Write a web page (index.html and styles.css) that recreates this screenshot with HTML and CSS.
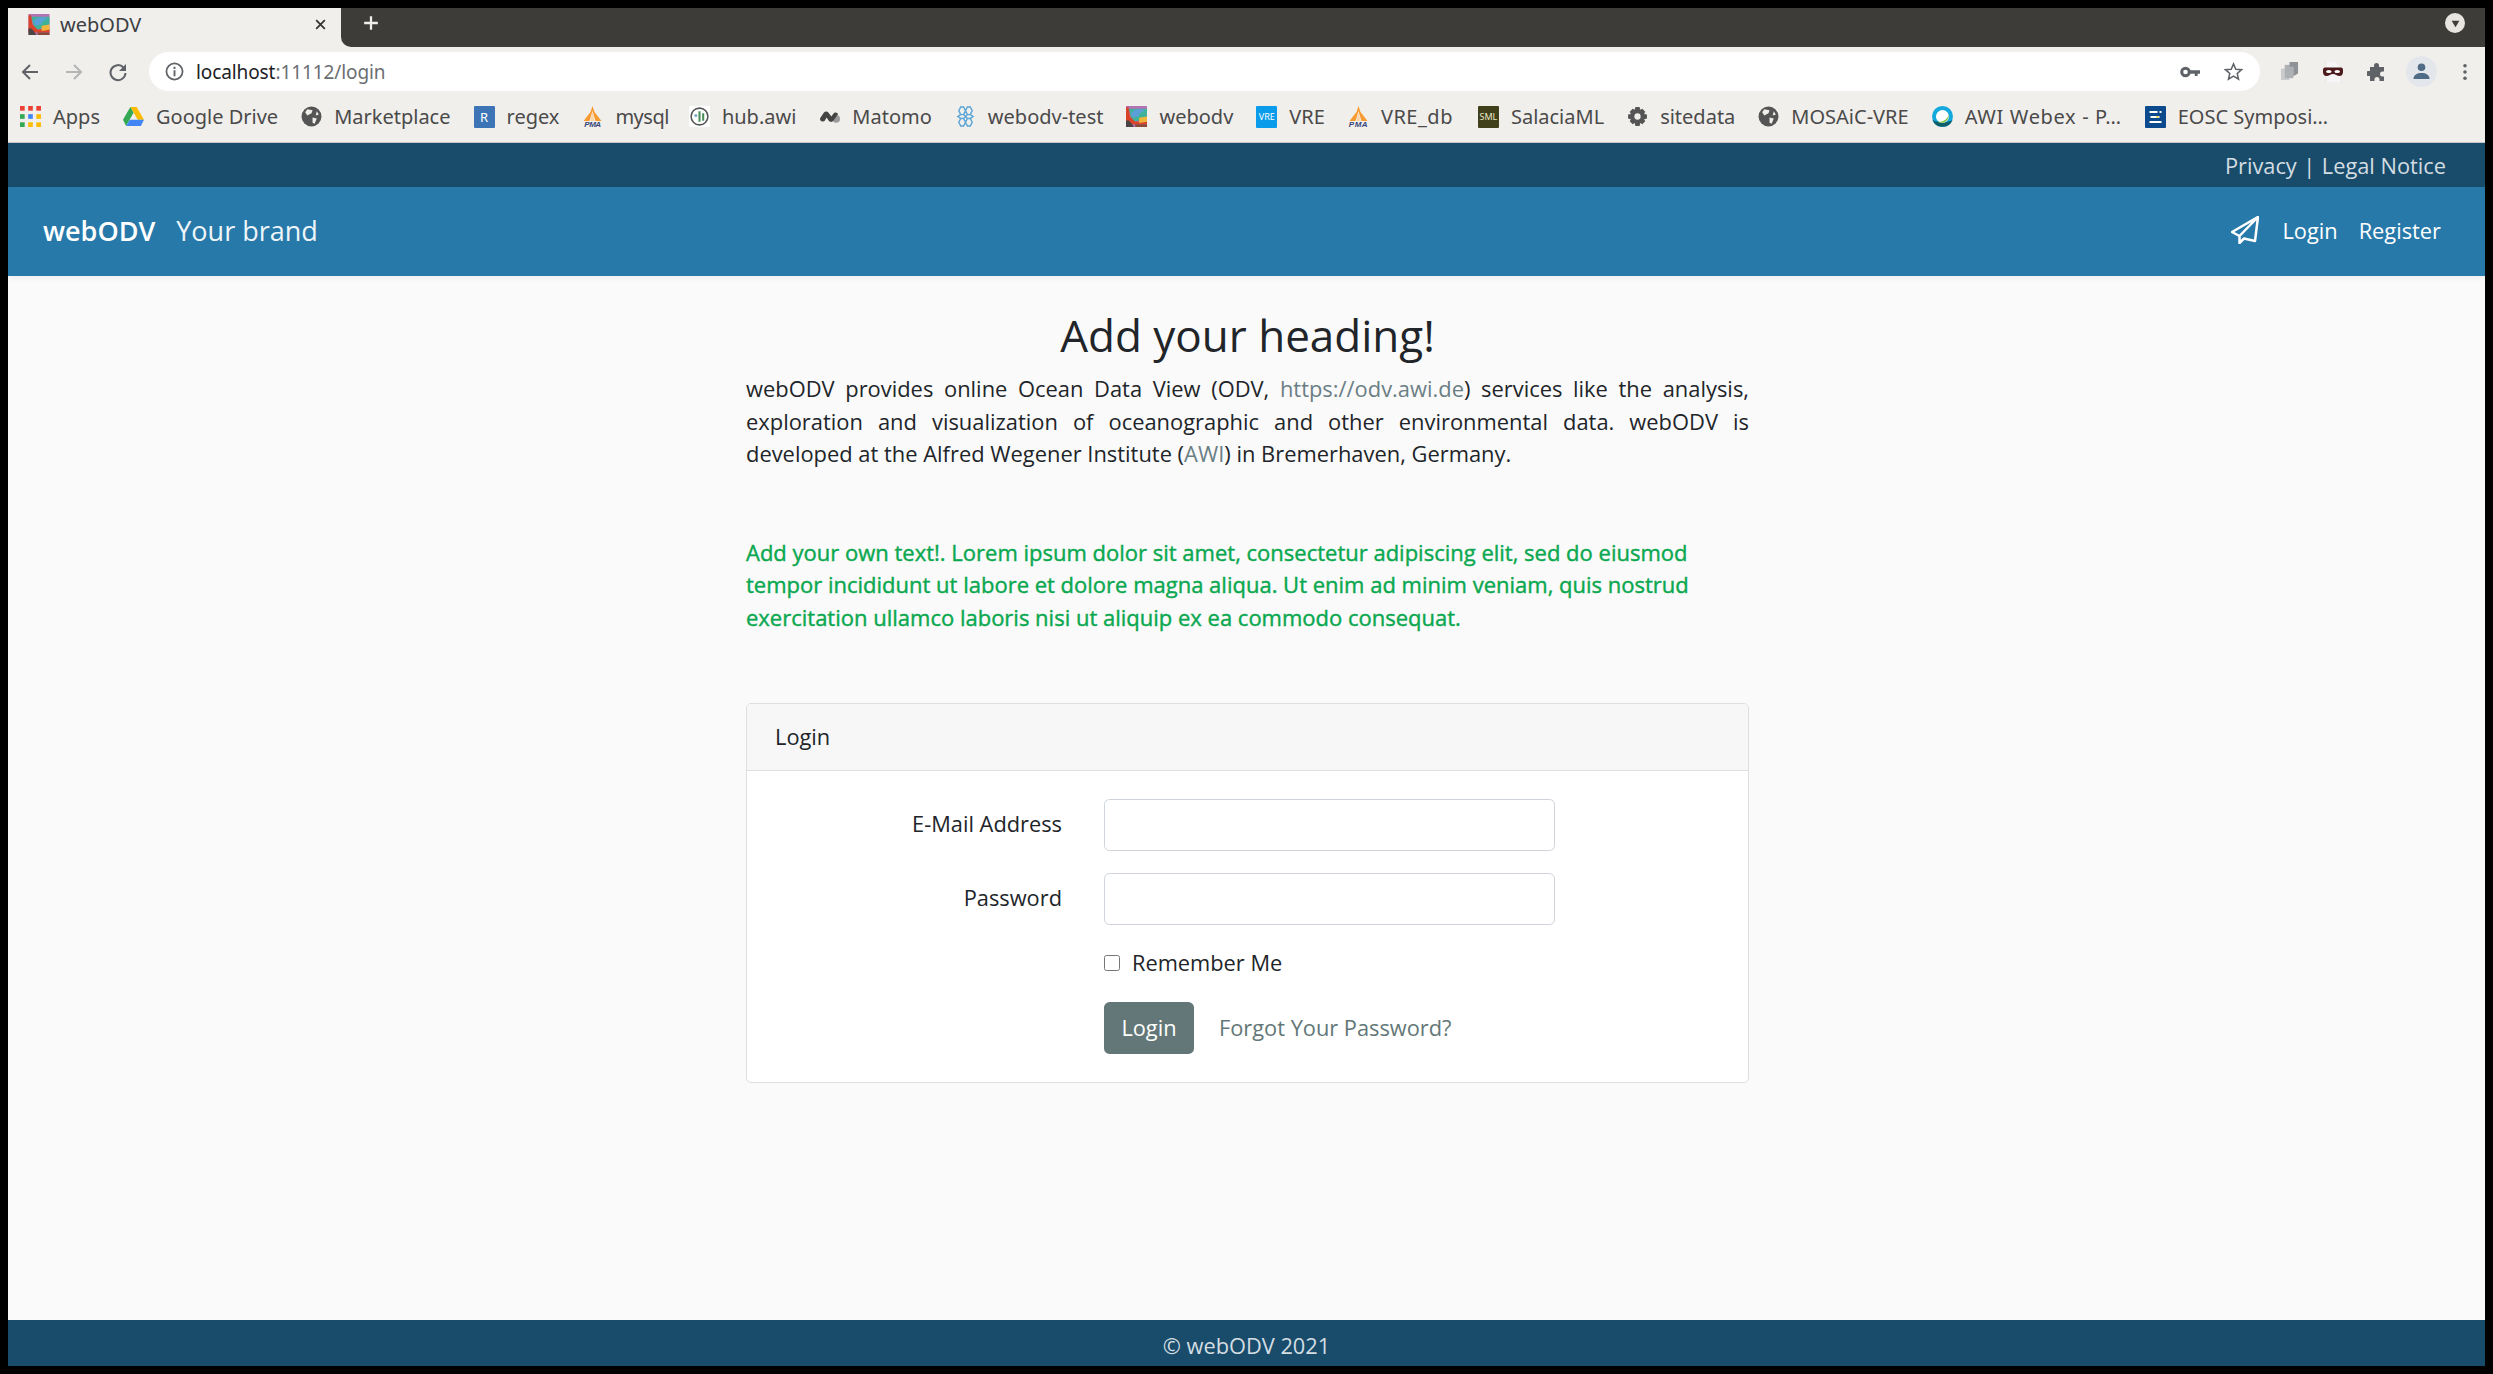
FILE: index.html
```html
<!DOCTYPE html>
<html lang="en">
<head>
<meta charset="utf-8">
<title>webODV</title>
<link rel="stylesheet" href="styles.css">
</head>
<body>
<div class="window">
  <div class="tabstrip">
    <div class="tab">
      <svg class="fav" viewBox="0 0 16 16"><use href="#odv"/></svg>
      <span class="tab-title">webODV</span>
      <svg class="tab-close" viewBox="0 0 12 12"><path d="M2 2l8 8M10 2l-8 8" stroke="#333" stroke-width="1.6" fill="none"/></svg>
    </div>
    <div class="strip-rest">
      <svg class="newtab" viewBox="0 0 14 14"><path d="M7 1v12M1 7h12" stroke="#f1efec" stroke-width="2" fill="none"/></svg>
      <div class="strip-space"></div>
      <div class="strip-menu"><svg viewBox="0 0 10 10"><path d="M1.5 2.5h7L5 8.500z" fill="#3d3c38"/></svg></div>
    </div>
  </div>
  <div class="toolbar">
    <svg class="nav-ic" viewBox="0 0 20 20"><path d="M18 10H3M10 3l-7 7 7 7" stroke="#5f6368" stroke-width="2" fill="none"/></svg>
    <svg class="nav-ic" viewBox="0 0 20 20"><path d="M2 10h15M10 3l7 7-7 7" stroke="#b4b5b6" stroke-width="2" fill="none"/></svg>
    <svg class="nav-ic" viewBox="0 0 20 20"><path d="M15.500 5.500A7.500 7.500 0 1 0 17.500 11" stroke="#5f6368" stroke-width="2" fill="none"/><path d="M18 2v7h-7z" fill="#5f6368"/></svg>
    <div class="omnibox">
      <svg class="info" viewBox="0 0 16 16"><circle cx="8" cy="8" r="6.800" stroke="#5f6368" stroke-width="1.500" fill="none"/><path d="M8 7v5M8 4v1.800" stroke="#5f6368" stroke-width="1.600"/></svg>
      <span class="url"><span class="url-host">localhost</span>:11112/login</span>
      <span class="omni-space"></span>
      <svg class="key" viewBox="0 0 20 12"><circle cx="5.500" cy="6" r="3.800" stroke="#5f6368" stroke-width="3" fill="none"/><path d="M9 4.300h11v3.400h-2.400V10h-2.800V7.700H9z" fill="#5f6368"/></svg>
      <svg class="star" viewBox="0 0 20 20"><path d="M10 2l2.400 5.600 6.100.5-4.600 4 1.400 6L10 14.900 4.700 18.100l1.400-6-4.600-4 6.100-.5z" stroke="#5f6368" stroke-width="1.600" fill="none"/></svg>
    </div>
    <svg class="ext ext-docs" viewBox="0 0 20 20"><rect x="1" y="7" width="9" height="12" fill="#c9cbcd"/><rect x="5" y="3" width="9" height="14" fill="#aeb1b4"/><path d="M10 0h9v12l-5 3V5h-4z" fill="#8f9296"/></svg>
    <svg class="ext ext-mask" viewBox="0 0 22 22"><path d="M4 0h9l6 6v16H4z" fill="#f6f6f6" stroke="#e0e0e0" stroke-width=".6"/><path d="M1 9c0-2 1-2.500 3-2.500h14c2 0 3 .5 3 2.500v2c0 2-1 4-3.500 4-2.500 0-4-2-6.500-2s-4 2-6.500 2C2 15 1 13 1 11z" fill="#4d1a1c"/><ellipse cx="6.800" cy="10.500" rx="2.800" ry="1.600" fill="#fff"/><ellipse cx="15.200" cy="10.500" rx="2.800" ry="1.600" fill="#fff"/></svg>
    <svg class="ext ext-puzzle" viewBox="0 0 20 20"><path d="M7 3.500a2.500 2.500 0 0 1 5 0V5h5v4.500h-1.500a2.500 2.500 0 0 0 0 5H17V19h-4.500v-1.500a2.500 2.500 0 0 0-5 0V19H3v-5H1.500a2.500 2.500 0 0 1 0-5H3V5h4z" fill="#5f6368"/></svg>
    <div class="avatar"><svg viewBox="0 0 20 20"><circle cx="10" cy="5.500" r="4" fill="#4f6b85"/><path d="M1.500 18c0-4.500 4-6.500 8.500-6.500s8.500 2 8.500 6.500z" fill="#4f6b85"/></svg></div>
    <svg class="kebab" viewBox="0 0 4 20"><circle cx="2" cy="3" r="2" fill="#5f6368"/><circle cx="2" cy="10" r="2" fill="#5f6368"/><circle cx="2" cy="17" r="2" fill="#5f6368"/></svg>
  </div>
  <div class="bookmarks">
    <span class="bm"><svg class="bm-ic" viewBox="0 0 18 18"><rect x="0" y="0" width="4" height="4" fill="#ea4335"/><rect x="7" y="0" width="4" height="4" fill="#ea4335"/><rect x="14" y="0" width="4" height="4" fill="#ea4335"/><rect x="0" y="7" width="4" height="4" fill="#34a853"/><rect x="7" y="7" width="4" height="4" fill="#4285f4"/><rect x="14" y="7" width="4" height="4" fill="#fbbc04"/><rect x="0" y="14" width="4" height="4" fill="#34a853"/><rect x="7" y="14" width="4" height="4" fill="#fbbc04"/><rect x="14" y="14" width="4" height="4" fill="#fbbc04"/></svg>Apps</span>
    <span class="bm"><svg class="bm-ic" viewBox="0 0 20 18"><path d="M7 0h6l7 12h-6z" fill="#fbbc04"/><path d="M7 0l3 5.500L3 18l-3-6z" fill="#34a853"/><path d="M3 18l3.500-6H20l-3 6z" fill="#4285f4"/></svg>Google Drive</span>
    <span class="bm"><svg class="bm-ic" viewBox="0 0 20 20"><use href="#globe"/></svg>Marketplace</span>
    <span class="bm"><span class="bm-sq bm-r">R</span>regex</span>
    <span class="bm bm-tight"><svg class="bm-ic" viewBox="0 0 20 21"><use href="#pma"/></svg>mysql</span>
    <span class="bm"><svg class="bm-ic" viewBox="0 0 20 20"><rect width="20" height="20" fill="#fff"/><circle cx="10" cy="10" r="8" fill="none" stroke="#555" stroke-width="1.500"/><path d="M10 5v10M13.500 7v7" stroke="#4a8f5a" stroke-width="2"/><circle cx="6.500" cy="9" r="1.500" fill="#7fa9c9"/></svg>hub.awi</span>
    <span class="bm"><svg class="bm-ic" viewBox="0 0 22 14"><circle cx="18" cy="9.500" r="4" fill="#9a9a9a"/><path d="M1 9 5 3a3.200 3.200 0 0 1 5 0l3 4 2-3a3 3 0 0 1 5 .5l-5 7a3 3 0 0 1-4.800 0L8 8l-2 3.500A3 3 0 0 1 1 9z" fill="#444"/></svg>Matomo</span>
    <span class="bm"><svg class="bm-ic" viewBox="0 0 22 22"><g fill="none" stroke="#5aa5d5" stroke-width="1.500"><path d="M6 1h3l2 4-2 4H6L4 5zM13 1h3l2 4-2 4h-3l-2-4zM6 13h3l2 4-2 4H6l-2-4zM13 13h3l2 4-2 4h-3l-2-4zM6 9l-3 2 3 2M16 9l3 2-3 2M9 9l2 2 2-2M9 13l2-2 2 2"/></g></svg>webodv-test</span>
    <span class="bm"><svg class="bm-ic" viewBox="0 0 16 16"><use href="#odv"/></svg>webodv</span>
    <span class="bm"><span class="bm-sq bm-vre">VRE</span>VRE</span>
    <span class="bm bm-loose"><svg class="bm-ic" viewBox="0 0 20 21"><use href="#pma"/></svg>VRE_db</span>
    <span class="bm"><span class="bm-sq bm-sml">SML</span>SalaciaML</span>
    <span class="bm"><svg class="bm-ic" viewBox="0 0 20 20"><path d="M8 1h4l.6 2.600 2-.9 2.800 2.800-1.100 2L19 8.200v3.600l-2.700.7 1.100 2-2.800 2.800-2-1.100L12 19H8l-.6-2.800-2 1.100-2.800-2.800 1.100-2L1 11.800V8.200l2.700-.7-1.100-2 2.800-2.800 2 .9z" fill="#555"/><circle cx="10" cy="10" r="3" fill="#f1efec"/></svg>sitedata</span>
    <span class="bm"><svg class="bm-ic" viewBox="0 0 20 20"><use href="#globe"/></svg>MOSAiC-VRE</span>
    <span class="bm bm-wide"><svg class="bm-ic" viewBox="0 0 20 20"><circle cx="10" cy="10" r="10" fill="#14a8dc"/><path d="M.5 13a10 10 0 0 0 19 0c-2 3-16 3-19 0z" fill="#0d5f6e"/><circle cx="10" cy="10" r="6.200" fill="#fff"/><path d="M15.800 8c.8 4-2.500 8-7 8-1.500 0-2.500-.5-3-1 4 .5 9-2 10-7z" fill="#7cc243"/></svg>AWI Webex - P…</span>
    <span class="bm"><span class="bm-sq bm-eosc"><svg viewBox="0 0 20 22"><path d="M4 6h8M14 6h2M5 11h9M4 16h12" stroke="#fff" stroke-width="2"/><path d="M11 11h2" stroke="#f5d442" stroke-width="2"/></svg></span>EOSC Symposi…</span>
    <svg class="defs" width="0" height="0"><defs>
      <g id="globe"><circle cx="10" cy="10" r="9.500" fill="#555"/><path d="M6 3l5 1-1 3-4 2-2-3zM11 11l4 1-2 5-2-1zM15 5l2 3-3 1z" fill="#f1efec"/></g>
      <g id="pma"><path d="M10 0l2 6 7 9H13L10 5 7 15H1l7-9z" fill="#f79a30"/><path d="M10 5l2 10H8z" fill="#fcd6a8"/><text x="10" y="21" text-anchor="middle" font-size="8" font-weight="700" font-style="italic" fill="#35467a" font-family="Liberation Sans, sans-serif">PMA</text></g>
      <g id="odv"><rect width="16" height="16" fill="#b473b4"/><path d="M2 2h14v6l-6 3-5 1z" fill="#3fb39a"/><path d="M4 5c3-3 8-3 11-1.500C12 4 10 6 9.500 8L5 9z" fill="#5b9fd8"/><path d="M0 1h2l1 7 4 4 9-1v3H0z" fill="#d9432a"/><path d="M10 9l6-1v4l-6 1z" fill="#f0b53a"/><path d="M0 11l2 0 2 2 2 3H0z" fill="#4a4444"/><path d="M7 14h9v2H7z" fill="#8a4a3a"/></g>
    </defs></svg>
  </div>
  <div class="page">
    <div class="topbar"><a>Privacy</a><span class="sep">|</span><a>Legal Notice</a></div>
    <nav class="navbar">
      <a class="brand">webODV</a>
      <a class="brand-sub">Your brand</a>
      <span class="nav-space"></span>
      <svg class="plane" viewBox="0 0 28 28"><path d="M27 1 1 16l7.500 4v7l4.500-4.500L24 25z M27 1 8.500 20" fill="none" stroke="#fff" stroke-width="2.500" stroke-linejoin="round"/></svg>
      <a class="nav-link">Login</a>
      <a class="nav-link">Register</a>
    </nav>
    <main class="main">
      <div class="container">
        <h1 class="heading">Add your heading!</h1>
        <p class="intro">webODV provides online Ocean Data View (ODV, <a class="link">https://odv.awi.de</a>) services like the analysis, exploration and visualization of oceanographic and other environmental data. webODV is developed at the Alfred Wegener Institute (<a class="link">AWI</a>) in Bremerhaven, Germany.</p>
        <p class="custom">Add your own text!. Lorem ipsum dolor sit amet, consectetur adipiscing elit, sed do eiusmod tempor incididunt ut labore et dolore magna aliqua. Ut enim ad minim veniam, quis nostrud exercitation ullamco laboris nisi ut aliquip ex ea commodo consequat.</p>
        <section class="card">
          <header class="card-header">Login</header>
          <form class="card-body">
            <div class="form-row"><label class="form-label">E-Mail Address</label><div class="form-field"><input class="input" type="email"></div></div>
            <div class="form-row"><label class="form-label">Password</label><div class="form-field"><input class="input" type="password"></div></div>
            <div class="form-row form-row-check"><span class="form-label"></span><div class="form-field check-field"><input class="check" type="checkbox"><span>Remember Me</span></div></div>
            <div class="form-row last"><span class="form-label"></span><div class="form-field action-field"><button class="btn" type="button">Login</button><a class="forgot">Forgot Your Password?</a></div></div>
          </form>
        </section>
      </div>
    </main>
    <footer class="footer">© webODV 2021</footer>
  </div>
</div>
</body>
</html>
```
FILE: styles.css
```css
* { box-sizing: border-box; }
html, body { margin: 0; height: 100%; }
body { background: #000; padding: 8px; font-family: "Open Sans", sans-serif; overflow: hidden; }
.window { height: 100%; display: flex; flex-direction: column; background: #f1efec; }
.tabstrip { height: 39px; flex: none; background: #f1efec; display: flex; align-items: stretch; }
.tab { width: 333px; display: flex; align-items: center; padding: 0 14px 6px 20px; font-family: "Noto Sans", sans-serif; border-top-left-radius: 6px; }
.fav { width: 22px; height: 21px; margin-right: 10px; }
.tab-title { font-size: 20px; color: #3c4043; flex: 1; }
.tab-close { width: 13px; height: 13px; }
.strip-rest { flex: 1; display: flex; background: #3d3c38; border-bottom-left-radius: 10px; }
.newtab { width: 16px; height: 16px; margin: 7px 0 0 22px; }
.strip-space { flex: 1; }
.strip-menu { width: 20px; height: 20px; border-radius: 50%; background: #e8e4df; margin: 5px 20px 0 0; display: flex; align-items: center; justify-content: center; }
.strip-menu svg { width: 11px; height: 11px; }
.toolbar { height: 44px; flex: none; display: flex; align-items: center; padding: 5px 0 0; }
.nav-ic { width: 20px; height: 20px; margin-left: 12px; }
.nav-ic + .nav-ic { margin-left: 24px; }
.omnibox { height: 39px; width: 2111px; margin-left: 21px; background: #fff; border-radius: 20px; display: flex; align-items: center; padding: 0 17px 0 16px; flex: none; }
.info { width: 19px; height: 19px; margin-right: 12px; }
.url { font-family: "Noto Sans", sans-serif; font-size: 19px; color: #6b6e72; letter-spacing: -.1px; }
.url-host { color: #202124; }
.omni-space { flex: 1; }
.key { width: 20px; height: 12px; margin-right: 24px; }
.star { width: 19px; height: 19px; }
.ext { flex: none; }
.ext-docs { width: 19px; height: 19px; margin-left: 20px; }
.ext-mask { width: 22px; height: 22px; margin-left: 23px; }
.ext-puzzle { width: 20px; height: 20px; margin-left: 23px; }
.avatar { width: 31px; height: 31px; margin-left: 19px; border-radius: 50%; background: #e3e6eb; display: flex; align-items: center; justify-content: center; }
.avatar svg { width: 19px; height: 19px; }
.kebab { width: 4px; height: 18px; margin-left: 26px; }
.bookmarks { height: 52px; flex: none; display: flex; align-items: center; padding: 0 0 0 12px; gap: 23px; border-bottom: 1px solid #c6c6c6; font-family: "Noto Sans", sans-serif; font-size: 20px; color: #4a4a4a; white-space: nowrap; position: relative; }
.bm { display: flex; align-items: center; }
.bm-wide { letter-spacing: .65px; }
.bm-tight { letter-spacing: -.5px; margin-right: -3px; }
.bm-loose { letter-spacing: .5px; margin-right: 2px; }
.bm-ic { width: 21px; height: 21px; margin-right: 12px; flex: none; }
.bm-sq { width: 21px; height: 22px; margin-right: 12px; border-radius: 1px; display: flex; align-items: center; justify-content: center; font-size: 10px; color: #fff; flex: none; }
.bm-r { background: #3d74b5; font-size: 13px; }
.bm-vre { background: #0a9bea; font-size: 9px; }
.bm-sml { background: #40401a; font-size: 9px; color: #e8e8c8; }
.bm-eosc { background: #0b4a8c; }
.bm-eosc svg { width: 21px; height: 22px; }
.defs { position: absolute; }
.page { flex: 1; min-height: 0; display: flex; flex-direction: column; background: #fafafa; }
.topbar { height: 44px; flex: none; background: #194c6b; color: #d3dde2; display: flex; align-items: center; justify-content: flex-end; font-size: 21.800px; padding-right: 39px; }
.sep { margin: 0 6.500px; }
.navbar { height: 89px; flex: none; background: #2779a9; color: #fff; display: flex; align-items: center; padding: 0 44px 2px 35px; font-size: 21.800px; box-shadow: 0 2px 6px rgba(0,0,0,.06); }
.brand { font-size: 27px; font-weight: 600; margin-right: 21px; }
.brand-sub { font-size: 27px; color: #eef5f9; }
.nav-space { flex: 1; }
.plane { width: 28px; height: 28px; margin: 0 23px 2px 0; }
.nav-link + .nav-link { margin-left: 21px; }
.main { flex: 1; min-height: 0; display: flex; justify-content: center; padding-left: 2px; }
.container { width: 1003px; }
.heading { margin: 0; height: 97px; padding-top: 31px; font-size: 44px; line-height: 56px; font-weight: 400; color: #212529; text-align: center; }
.intro { margin: 0; font-size: 21.900px; line-height: 32.500px; color: #212529; text-align: justify; }
.link { color: #6a7f85; }
.custom { margin: 65px 0 0; font-size: 22px; line-height: 32.900px; color: #0aa84f; -webkit-text-stroke: .4px #0aa84f; }
.card { margin-top: 68.500px; background: #fff; border: 1px solid #dfdfdf; border-radius: 5px; overflow: hidden; font-size: 21.800px; line-height: 32.400px; color: #212529; }
.card-header { height: 67px; padding: 17px 28px; background: #f7f7f7; border-bottom: 1px solid #dfdfdf; }
.card-body { padding: 28px; margin: 0; }
.form-row { display: flex; margin: 0 -21px 22px; }
.form-row.form-row-check { margin-bottom: 23px; }
.form-row.last { margin-bottom: 0; }
.form-label { width: 33.333%; padding: 9.500px 21px 0; text-align: right; }
.form-field { width: 50%; padding: 0 21px; }
.input { display: block; width: 100%; height: 52px; border: 1px solid #ced4da; border-radius: 5.600px; background: #fff; }
.check-field { display: flex; align-items: center; height: 32px; }
.check { width: 16px; height: 16px; margin: 0 12px 0 0; }
.action-field { display: flex; align-items: center; }
.btn { width: 90px; height: 52px; border: 0; border-radius: 5.600px; background: #637778; color: #fff; font: inherit; }
.forgot { margin-left: 25px; color: #637778; }
.footer { height: 46px; flex: none; background: #194c6b; color: #d3dde2; display: flex; align-items: center; justify-content: center; font-size: 21.800px; padding-top: 4px; }
```
